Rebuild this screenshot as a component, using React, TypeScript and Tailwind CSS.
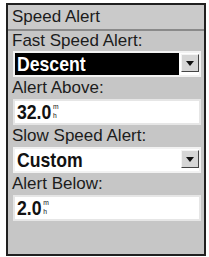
const label = 'font-["Liberation_Sans",Arial,sans-serif] text-[17px] text-[#1c1c1c] pl-1';
const value = 'font-["Liberation_Sans",Arial,sans-serif] font-bold text-[21px] leading-[22px]';

function DropButton() {
  return (
    <div className="my-px flex h-[18px] w-[18px] items-center justify-center border border-t-[#f4f4f4] border-l-[#f4f4f4] border-b-[#444] border-r-[#444] bg-[#d6d6d6]">
      <svg width="8" height="5" viewBox="0 0 8 5">
        <path d="M0 0 H8 L4 5 Z" fill="#111" />
      </svg>
    </div>
  );
}

function SelectField({ text, active }: { text: string; active?: boolean }) {
  return (
    <div className="ml-[5px] mr-[3px] flex h-[26px] border-2 border-[#f2f2f2] bg-white">
      <div className={`flex-1 pl-[2px] ${active ? 'bg-black text-white' : 'bg-white text-[#111]'}`}>
        <span className={`inline-block origin-left scale-x-[0.84] ${value}`}>{text}</span>
      </div>
      <div className="w-[2px]" />
      <DropButton />
    </div>
  );
}

function NumberField({ num }: { num: string }) {
  return (
    <div className="ml-[5px] mr-[3px] flex h-[26px] items-start border-2 border-[#e6e6e6] bg-white pl-[2px]">
      <span className="inline-flex origin-left scale-x-[0.84] items-start text-[#111]">
        <span className={value}>{num}</span>
        <span className="ml-[2px] mt-[1px] flex flex-col font-['Liberation_Sans',Arial,sans-serif] text-[8px] leading-[9px]">
          <span>m</span>
          <span>h</span>
        </span>
      </span>
    </div>
  );
}

export default function App() {
  return (
    <div className="h-[257px] w-[209px] bg-white pt-[3px] pl-[6px]">
      <div className="flex h-[253px] w-[200px] flex-col border-2 border-[#202020] bg-[#c6c6c6]">
        <div className={`h-[26px] border-b-2 border-[#8a8a8a] bg-[#cacaca] leading-[24px] ${label}`}>Speed Alert</div>
        <div className={`h-[20px] leading-[20px] ${label}`}>Fast Speed Alert:</div>
        <SelectField text="Descent" active />
        <div className={`h-[22px] leading-[22px] ${label}`}>Alert Above:</div>
        <NumberField num="32.0" />
        <div className={`h-[22px] leading-[22px] ${label}`}>Slow Speed Alert:</div>
        <SelectField text="Custom" />
        <div className={`h-[22px] leading-[22px] ${label}`}>Alert Below:</div>
        <NumberField num="2.0" />
      </div>
    </div>
  );
}
